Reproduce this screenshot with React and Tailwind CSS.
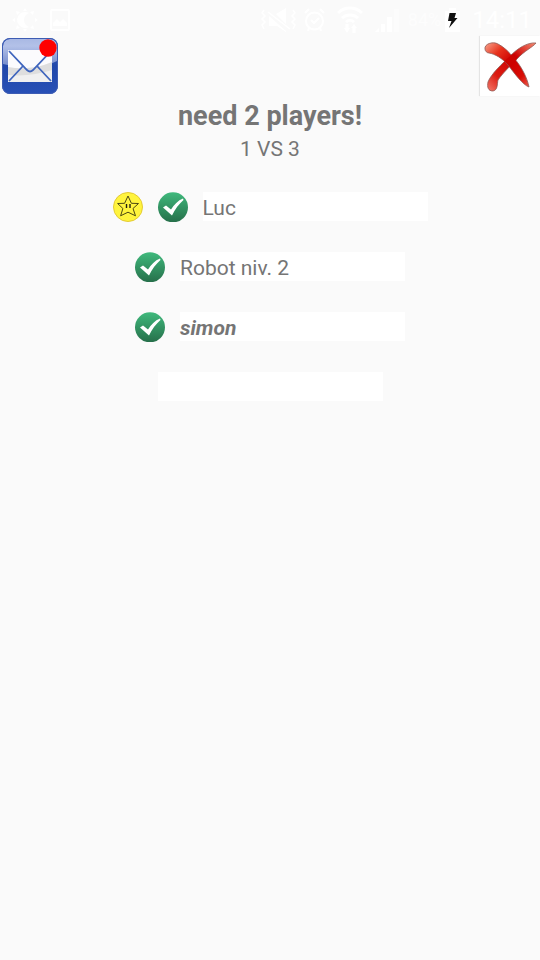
import React from "react";

function BrightnessIcon() {
  return (
    <svg width="26" height="24" viewBox="0 0 26 24" fill="#ffffff" aria-hidden="true">
      <path d="M13 4a8 8 0 1 0 4 15c-3-1-5-4-5-7s2-6 5-7a8 8 0 0 0-4-1z" />
      <path d="M13 0l2 3h-4zM13 24l2-3h-4zM0 12l3-2v4zM26 12l-3-2v4zM4 3l4 1-3 3zM22 3l-4 1 3 3zM4 21l4-1-3-3zM22 21l-4-1 3-3z" />
    </svg>
  );
}

function PictureIcon() {
  return (
    <svg width="20" height="22" viewBox="0 0 20 22" fill="none" aria-hidden="true">
      <rect x="1" y="1" width="18" height="20" rx="1" stroke="#ffffff" strokeWidth="2" />
      <path d="M3 17v-3l4-4 3 3 3-3 4 4v3z" fill="#ffffff" />
    </svg>
  );
}

function VibrateMuteIcon() {
  return (
    <svg width="35" height="24" viewBox="0 0 35 24" fill="none" aria-hidden="true">
      <path d="M3 2l-2 3 3 3-3 3 3 3-3 3 2 4M32 2l2 3-3 3 3 3-3 3 3 3-2 4" stroke="#ffffff" strokeWidth="1.500" />
      <path d="M15 6l10-6v16zM8 8l17 15v1l-9-6H8z" fill="#ffffff" />
      <path d="M7 4l22 17" stroke="#ffffff" strokeWidth="1.500" />
    </svg>
  );
}

function AlarmIcon() {
  return (
    <svg width="21" height="24" viewBox="0 0 21 24" fill="none" stroke="#ffffff" strokeWidth="2" aria-hidden="true">
      <circle cx="10.500" cy="13" r="8.500" />
      <path d="M7 12l3 3 5-5M1 5l4-4M20 5l-4-4M5 20l-1 3M16 20l1 3" />
    </svg>
  );
}

function WifiIcon() {
  return (
    <svg width="26" height="28" viewBox="0 0 26 28" fill="none" stroke="#ffffff" aria-hidden="true">
      <path d="M1 7a17 17 0 0 1 24 0M5 12a12 12 0 0 1 16 0M9 16a6 6 0 0 1 8 0" strokeWidth="3" />
      <path d="M10 18v5M17 27v-5" strokeWidth="3" />
      <path d="M7 22h6l-3 5zM14 22h6l-3-4z" fill="#ffffff" stroke="none" />
    </svg>
  );
}

function SignalIcon() {
  return (
    <svg width="25" height="24" viewBox="0 0 25 24" fill="#ffffff" aria-hidden="true">
      <path d="M0 24l4-4v4zM6 16h4v8H6zM12 9h5v15h-5z" />
      <path d="M19 1h5v23h-5z" opacity="0.400" />
    </svg>
  );
}

function BatteryIcon() {
  return (
    <svg width="15" height="24" viewBox="0 0 15 24" aria-hidden="true">
      <path d="M0 3h4V0h7v3h4v21H0z" fill="#ffffff" />
      <path d="M4.500 5H11L9.500 10H12.500L4 20L6.500 13H3z" fill="#111111" />
    </svg>
  );
}

function StatusBar() {
  return (
    <div className="flex h-9 items-center justify-between pl-2 pr-2 pt-1 text-white">
      <div className="flex items-center gap-3 pl-1">
        <BrightnessIcon />
        <PictureIcon />
      </div>
      <div className="flex items-center">
        <div className="flex items-center gap-2">
          <VibrateMuteIcon />
          <AlarmIcon />
        </div>
        <div className="ml-3 flex items-center gap-3">
          <WifiIcon />
          <SignalIcon />
        </div>
        <span className="ml-2 text-lg leading-6 text-[#fdfdfd]">84%</span>
        <div className="ml-1 flex items-center gap-3">
          <BatteryIcon />
          <span className="text-2xl leading-6">14:11</span>
        </div>
      </div>
    </div>
  );
}

function MailIcon() {
  return (
    <svg className="block" width="60" height="60" viewBox="0 0 60 60" aria-hidden="true">
      <defs>
        <linearGradient id="mailGloss" x1="0" y1="0" x2="0" y2="1">
          <stop offset="0" stopColor="#a9b9e4" />
          <stop offset="0.250" stopColor="#b3c1e8" />
          <stop offset="1" stopColor="#6f87ca" />
        </linearGradient>
        <linearGradient id="mailBody" x1="0" y1="0" x2="0" y2="1">
          <stop offset="0" stopColor="#4463ba" />
          <stop offset="0.500" stopColor="#2047aa" />
          <stop offset="1" stopColor="#2850b6" />
        </linearGradient>
      </defs>
      <rect x="2" y="2" width="56" height="56" rx="8" fill="url(#mailBody)" />
      <path d="M3 28V10a7 7 0 0 1 7-7h40a7 7 0 0 1 7 7v15Q46 31 30 31T3 28z" fill="url(#mailGloss)" />
      <rect x="2.500" y="2.500" width="55" height="55" rx="7.500" fill="none" stroke="#3d5cb3" />
      <rect x="8" y="14" width="44" height="32" rx="1" fill="#fbfbfd" />
      <path d="M8 31q23 4 44-5v19a1 1 0 0 1-1 1H9a1 1 0 0 1-1-1z" fill="#dedede" />
      <path d="M8 39q23 2 44-5v11a1 1 0 0 1-1 1H9a1 1 0 0 1-1-1z" fill="#f0f0f0" />
      <path d="M9 15l18 19q3 3 6 0l18-19M9 45l14-15M51 45L37 30" fill="none" stroke="#3f65bd" strokeWidth="1.800" />
      <circle cx="48" cy="12" r="8.700" fill="#ff0000" />
    </svg>
  );
}

function CrossIcon() {
  return (
    <svg className="block" width="60" height="60" viewBox="0 0 60 60" aria-hidden="true">
      <defs>
        <linearGradient id="crossStroke" x1="0" y1="0" x2="1" y2="1">
          <stop offset="0" stopColor="#f8a58f" />
          <stop offset="0.250" stopColor="#e8331d" />
          <stop offset="0.500" stopColor="#cc0000" />
          <stop offset="0.800" stopColor="#d80d05" />
          <stop offset="1" stopColor="#ee5a4d" />
        </linearGradient>
        <linearGradient id="crossTail" x1="0" y1="1" x2="1" y2="0">
          <stop offset="0" stopColor="#f47a6b" />
          <stop offset="0.250" stopColor="#dc1c12" />
          <stop offset="0.650" stopColor="#cc0000" />
          <stop offset="1" stopColor="#f58c72" />
        </linearGradient>
      </defs>
      <g strokeWidth="0.800" strokeLinejoin="round">
        <path d="M56 7C47 6 37 13 30 20C22 28 11 38 8 46C7 51 8 55 13 55C18 54 17 48 18 44C22 38 31 29 37 23C44 15 53 11 56 7z" fill="url(#crossTail)" stroke="#8f5a55" />
        <path d="M5 13C4 8 13 5 18 8C24 11 29 16 34 22C41 30 47 41 49 51C43 49 35 38 28 29C22 22 15 18 9 17C7 17 5 15 5 13z" fill="url(#crossStroke)" stroke="#8f5a55" />
      </g>
      <path d="M24.500 25L32 18.500L36.500 23.500L30 30.500L28 28.500z" fill="#cc0300" />
    </svg>
  );
}

function StarIcon() {
  return (
    <svg width="30" height="30" viewBox="0 0 30 30" role="img" aria-label="Host">
      <circle cx="15" cy="15" r="14.500" fill="#fff43d" stroke="#e3ca35" />
      <path d="M15 4l3.400 7.300 7.100.2-5.500 5 2.500 7.300-7.500-3.600-7.400 3.600 2.300-7.300-5.300-5 7-.2z" fill="#fff43d" stroke="#4d4913" strokeWidth="1" strokeLinejoin="round" />
      <path d="M13.500 12v4M17 12v4" stroke="#222011" strokeWidth="1.400" />
    </svg>
  );
}

function CheckIcon() {
  return (
    <svg width="30" height="30" viewBox="0 0 30 30" role="img" aria-label="Ready">
      <defs>
        <linearGradient id="checkFill" x1="0" y1="0" x2="0" y2="1">
          <stop offset="0" stopColor="#3fb97c" />
          <stop offset="1" stopColor="#266f4a" />
        </linearGradient>
      </defs>
      <circle cx="15" cy="15.300" r="15" fill="url(#checkFill)" />
      <path d="M5 15.500L8 13.500L13 17.500C16 12.500 20 8.500 25 6.500L25.500 8C21 12 17 17 14 23.500z" fill="#ffffff" />
    </svg>
  );
}

const players = [
  { id: 1, name: "Luc", host: true, ready: true },
  { id: 2, name: "Robot niv. 2", ready: true },
  { id: 3, name: "simon", ready: true, self: true },
  { id: 4, name: "" },
];

function PlayerRow({ player }) {
  return (
    <li className="flex h-[30px] items-start justify-center gap-[15px]">
      {player.host && <StarIcon />}
      {player.ready && <CheckIcon />}
      <span
        className={
          player.self
            ? "h-[29px] w-[225px] bg-white text-[21px] leading-8 font-bold italic"
            : "h-[29px] w-[225px] bg-white text-[21px] leading-8"
        }
      >
        {player.name}
      </span>
    </li>
  );
}

export default function App() {
  return (
    <div className="min-h-screen bg-[#fafafa] font-[Roboto,sans-serif] text-[#757575]">
      <StatusBar />
      <header className="flex items-start justify-between">
        <button type="button" aria-label="Messages">
          <MailIcon />
        </button>
        <button type="button" aria-label="Leave game" className="bg-white shadow-[-1px_0_1px_#e4e4e4]">
          <CrossIcon />
        </button>
      </header>
      <main className="pt-1 text-center">
        <h1 className="text-[27px] leading-8 font-bold">need 2 players!</h1>
        <p className="text-[21px] leading-[34px]">1 VS 3</p>
        <ul className="mt-[26px] flex flex-col gap-[30px] text-left">
          {players.map((player) => (
            <PlayerRow key={player.id} player={player} />
          ))}
        </ul>
      </main>
    </div>
  );
}
